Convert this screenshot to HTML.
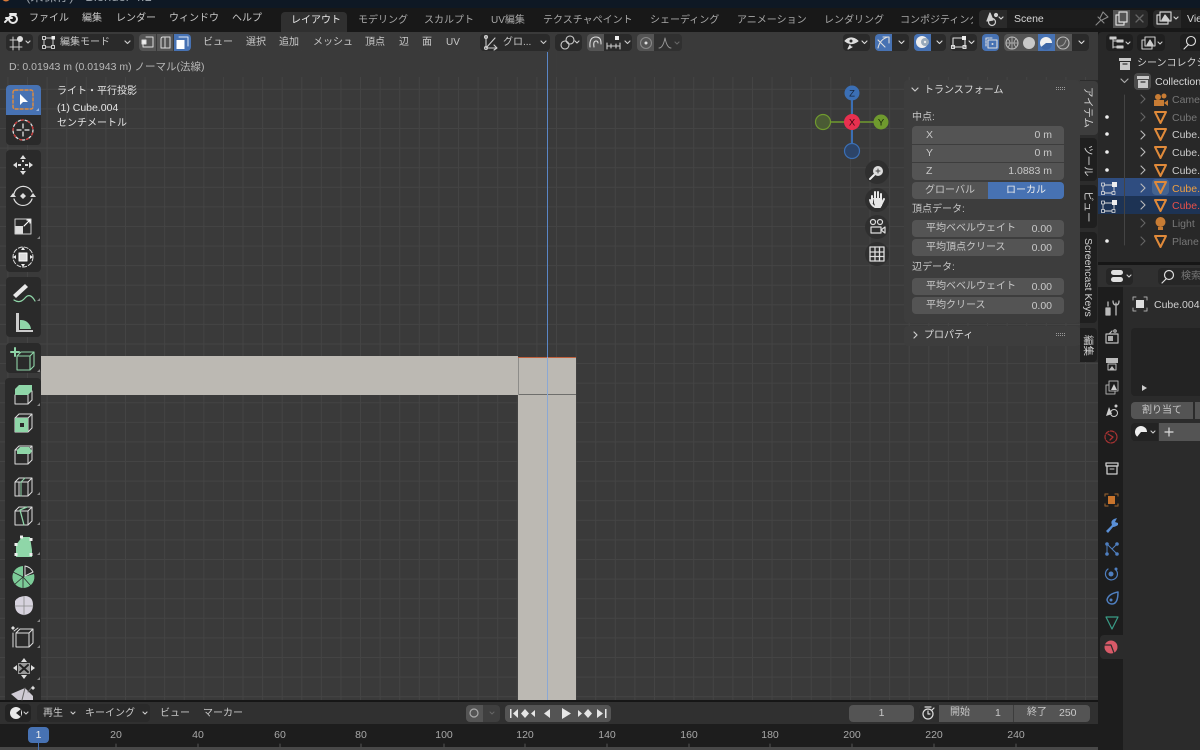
<!DOCTYPE html>
<html lang="ja"><head><meta charset="utf-8"><title>Blender</title>
<style>
html,body{margin:0;padding:0;background:#181818}
body{position:relative;width:1200px;height:750px;overflow:hidden;font-family:"Liberation Sans","Noto Sans CJK JP",sans-serif;font-size:10px;color:#ccc}
.b{position:absolute}
.t{position:absolute;white-space:nowrap;line-height:14px;font-size:10px;color:#c8c8c8;margin-top:1px}
.n{font-size:10.5px}
.r{text-align:right}
.c{text-align:center}
.v{transform:rotate(90deg);transform-origin:0 0;color:#d0d0d0;margin-top:0}
</style></head><body>
<!-- title -->
<div class="b" style="left:0;top:0;width:1200px;height:8px;background:#0e1824"></div>
<div class="t" style="left:26px;top:-11px;color:#98a0a8;font-size:13px">(未保存) - Blender 4.1</div>
<!-- top bar -->
<div class="b" style="left:0;top:8px;width:1200px;height:24px;background:#181818"></div>
<div class="b" style="left:281px;top:12px;width:66px;height:20px;background:#303030;border-radius:4px 4px 0 0"></div>
<span class="t" style="left:29px;top:11px">ファイル</span><span class="t" style="left:82px;top:11px">編集</span><span class="t" style="left:116px;top:11px">レンダー</span><span class="t" style="left:169px;top:11px">ウィンドウ</span><span class="t" style="left:232px;top:11px">ヘルプ</span>
<span class="t" style="left:291px;top:13px;color:#e6e6e6">レイアウト</span><span class="t" style="left:358px;top:13px;color:#a8a8a8">モデリング</span><span class="t" style="left:424px;top:13px;color:#a8a8a8">スカルプト</span><span class="t" style="left:491px;top:13px;color:#a8a8a8">UV編集</span><span class="t" style="left:543px;top:13px;color:#a8a8a8">テクスチャペイント</span><span class="t" style="left:650px;top:13px;color:#a8a8a8">シェーディング</span><span class="t" style="left:737px;top:13px;color:#a8a8a8">アニメーション</span><span class="t" style="left:824px;top:13px;color:#a8a8a8">レンダリング</span><span class="t" style="left:900px;top:13px;color:#a8a8a8;width:73px;overflow:hidden">コンポジティング</span>
<div class="b" style="left:979px;top:10px;width:169px;height:18px;background:#2a2a2a;border-radius:4px"></div>
<div class="b" style="left:1007px;top:10px;width:106px;height:18px;background:#1d1d1d"></div>
<div class="b" style="left:1113px;top:10px;width:17px;height:18px;background:#545454"></div>
<span class="t n" style="left:1014px;top:11px;color:#d8d8d8">Scene</span>
<div class="b" style="left:1153px;top:10px;width:47px;height:18px;background:#2a2a2a;border-radius:4px 0 0 4px"></div>
<div class="b" style="left:1181px;top:10px;width:19px;height:18px;background:#1d1d1d"></div>
<span class="t n" style="left:1187px;top:11px;color:#d8d8d8">View Layer</span>

<!-- viewport -->
<div class="b" style="left:0;top:32px;width:1098px;height:668px;background-color:#3a3a3a;background-image:linear-gradient(to right,#444 1px,transparent 1px),linear-gradient(to bottom,#444 1px,transparent 1px);background-size:19.6px 19.6px;background-position:7.4px -2px"></div>
<div class="b" style="left:0;top:32px;width:1098px;height:45px;background:#3a3a3a;opacity:.93"></div>
<!-- geometry -->
<div class="b" style="left:41px;top:356px;width:477px;height:39px;background:#bcb9b3"></div>
<div class="b" style="left:518px;top:357px;width:58px;height:343px;background:#bcb9b3"></div>
<div class="b" style="left:518px;top:394px;width:58px;height:1px;background:#6e6e6c"></div>
<div class="b" style="left:518px;top:357px;width:1px;height:38px;background:#8d8c89"></div>
<div class="b" style="left:518px;top:357px;width:58px;height:1px;background:#c0603c"></div>
<div class="b" style="left:547px;top:52px;width:1px;height:305px;background:#5a86c6"></div>
<div class="b" style="left:547px;top:357px;width:1px;height:343px;background:#8ba8d4"></div>

<!-- header rows -->
<div class="b" style="left:6px;top:34px;width:27px;height:17px;background:#2a2a2a;border-radius:4px"></div>
<div class="b" style="left:38px;top:34px;width:96px;height:17px;background:#2a2a2a;border-radius:4px"></div>
<span class="t" style="left:60px;top:35px">編集モード</span>
<div class="b" style="left:139px;top:34px;width:17px;height:17px;background:#545454;border-radius:4px 0 0 4px"></div>
<div class="b" style="left:157px;top:34px;width:16px;height:17px;background:#545454"></div>
<div class="b" style="left:174px;top:34px;width:17px;height:17px;background:#4772b3;border-radius:0 4px 4px 0"></div>
<span class="t" style="left:203px;top:35px">ビュー</span><span class="t" style="left:246px;top:35px">選択</span><span class="t" style="left:279px;top:35px">追加</span><span class="t" style="left:313px;top:35px">メッシュ</span><span class="t" style="left:365px;top:35px">頂点</span><span class="t" style="left:399px;top:35px">辺</span><span class="t" style="left:422px;top:35px">面</span><span class="t" style="left:446px;top:35px">UV</span>
<div class="b" style="left:480px;top:34px;width:70px;height:17px;background:#2a2a2a;border-radius:4px"></div>
<span class="t" style="left:503px;top:35px">グロ...</span>
<div class="b" style="left:555px;top:34px;width:27px;height:17px;background:#2a2a2a;border-radius:4px"></div>
<div class="b" style="left:587px;top:34px;width:17px;height:17px;background:#545454;border-radius:4px 0 0 4px"></div>
<div class="b" style="left:604px;top:34px;width:28px;height:17px;background:#2a2a2a;border-radius:0 4px 4px 0"></div>
<div class="b" style="left:637px;top:34px;width:17px;height:17px;background:#545454;border-radius:4px 0 0 4px"></div>
<div class="b" style="left:654px;top:34px;width:28px;height:17px;background:#303030;border-radius:0 4px 4px 0"></div>
<div class="b" style="left:843px;top:34px;width:27px;height:17px;background:#2a2a2a;border-radius:4px"></div>
<div class="b" style="left:875px;top:34px;width:17px;height:17px;background:#4772b3;border-radius:4px 0 0 4px"></div>
<div class="b" style="left:892px;top:34px;width:17px;height:17px;background:#2a2a2a;border-radius:0 4px 4px 0"></div>
<div class="b" style="left:914px;top:34px;width:17px;height:17px;background:#4772b3;border-radius:4px 0 0 4px"></div>
<div class="b" style="left:931px;top:34px;width:15px;height:17px;background:#2a2a2a;border-radius:0 4px 4px 0"></div>
<div class="b" style="left:950px;top:34px;width:27px;height:17px;background:#2a2a2a;border-radius:4px"></div>
<div class="b" style="left:982px;top:34px;width:17px;height:17px;background:#4772b3;border-radius:4px"></div>
<div class="b" style="left:1004px;top:34px;width:68px;height:17px;background:#545454;border-radius:4px 0 0 4px"></div>
<div class="b" style="left:1038px;top:34px;width:17px;height:17px;background:#4772b3"></div>
<div class="b" style="left:1072px;top:34px;width:17px;height:17px;background:#2a2a2a;border-radius:0 4px 4px 0"></div>
<span class="t n" style="left:9px;top:59px;color:#b8b8b8">D: 0.01943 m (0.01943 m) ノーマル(法線)</span>
<span class="t" style="left:57px;top:84px;color:#e4e4e4">ライト・平行投影</span>
<span class="t n" style="left:57px;top:100px;color:#e4e4e4">(1) Cube.004</span>
<span class="t" style="left:57px;top:116px;color:#e4e4e4">センチメートル</span>

<!-- toolbar -->
<div class="b" style="left:6px;top:85px;width:35px;height:60px;background:#2a2a2a;border-radius:4px"></div>
<div class="b" style="left:6px;top:85px;width:35px;height:30px;background:#4772b3;border-radius:4px 4px 0 0"></div>
<div class="b" style="left:6px;top:150px;width:35px;height:122px;background:#2a2a2a;border-radius:4px"></div>
<div class="b" style="left:6px;top:277px;width:35px;height:60px;background:#2a2a2a;border-radius:4px"></div>
<div class="b" style="left:6px;top:343px;width:35px;height:30px;background:#2a2a2a;border-radius:4px"></div>
<div class="b" style="left:5px;top:378px;width:36px;height:322px;background:#2a2a2a;border-radius:4px 4px 0 0"></div>

<!-- sidebar -->
<div class="b" style="left:904px;top:80px;width:176px;height:243px;background:#3d3d3d;border-radius:4px"></div>
<div class="b" style="left:904px;top:326px;width:176px;height:20px;background:#3d3d3d;border-radius:4px"></div>
<div class="b" style="left:1080px;top:80px;width:18px;height:282px;background:#2c2c2c"></div>
<div class="b" style="left:1080px;top:81px;width:18px;height:54px;background:#3d3d3d;border-radius:0 4px 4px 0"></div>
<div class="b" style="left:1080px;top:138px;width:17px;height:43px;background:#1f1f1f;border-radius:0 4px 4px 0"></div>
<div class="b" style="left:1080px;top:185px;width:17px;height:43px;background:#1f1f1f;border-radius:0 4px 4px 0"></div>
<div class="b" style="left:1080px;top:232px;width:17px;height:91px;background:#1f1f1f;border-radius:0 4px 4px 0"></div>
<div class="b" style="left:1080px;top:328px;width:17px;height:34px;background:#1f1f1f;border-radius:0 4px 4px 0"></div>
<span class="t v n" style="left:1095px;top:87px">アイテム</span>
<span class="t v n" style="left:1095px;top:145px">ツール</span>
<span class="t v n" style="left:1095px;top:191px">ビュー</span>
<span class="t v n" style="left:1095px;top:238px">Screencast Keys</span>
<span class="t v n" style="left:1095px;top:335px">編集</span>

<span class="t" style="left:924px;top:83px;color:#dcdcdc">トランスフォーム</span>
<span class="t" style="left:912px;top:110px">中点:</span>
<div class="b" style="left:912px;top:126px;width:152px;height:54px;background:#545454;border-radius:4px"></div>
<div class="b" style="left:912px;top:144px;width:152px;height:1px;background:#3d3d3d"></div>
<div class="b" style="left:912px;top:162px;width:152px;height:1px;background:#3d3d3d"></div>
<span class="t n" style="left:926px;top:127px">X</span><span class="t r n" style="right:148px;top:127px">0 m</span>
<span class="t n" style="left:926px;top:145px">Y</span><span class="t r n" style="right:148px;top:145px">0 m</span>
<span class="t n" style="left:926px;top:163px">Z</span><span class="t r n" style="right:148px;top:163px">1.0883 m</span>
<div class="b" style="left:912px;top:182px;width:76px;height:17px;background:#545454;border-radius:4px 0 0 4px"></div>
<div class="b" style="left:988px;top:182px;width:76px;height:17px;background:#4772b3;border-radius:0 4px 4px 0"></div>
<span class="t c" style="left:912px;top:183px;width:76px">グローバル</span><span class="t c" style="left:988px;top:183px;width:76px;color:#eee">ローカル</span>
<span class="t" style="left:912px;top:202px">頂点データ:</span>
<div class="b" style="left:912px;top:220px;width:152px;height:17px;background:#545454;border-radius:4px"></div>
<div class="b" style="left:912px;top:239px;width:152px;height:17px;background:#545454;border-radius:4px"></div>
<span class="t" style="left:926px;top:221px">平均ベベルウェイト</span><span class="t r n" style="right:148px;top:221px">0.00</span>
<span class="t" style="left:926px;top:240px">平均頂点クリース</span><span class="t r n" style="right:148px;top:240px">0.00</span>
<span class="t" style="left:912px;top:260px">辺データ:</span>
<div class="b" style="left:912px;top:278px;width:152px;height:17px;background:#545454;border-radius:4px"></div>
<div class="b" style="left:912px;top:297px;width:152px;height:17px;background:#545454;border-radius:4px"></div>
<span class="t" style="left:926px;top:279px">平均ベベルウェイト</span><span class="t r n" style="right:148px;top:279px">0.00</span>
<span class="t" style="left:926px;top:298px">平均クリース</span><span class="t r n" style="right:148px;top:298px">0.00</span>
<span class="t" style="left:924px;top:328px;color:#dcdcdc">プロパティ</span>

<!-- timeline -->
<div class="b" style="left:0;top:700px;width:1098px;height:2px;background:#161616"></div>
<div class="b" style="left:0;top:702px;width:1098px;height:22px;background:#303030"></div>
<div class="b" style="left:0;top:724px;width:1098px;height:23px;background:#1d1d1d"></div>
<div class="b" style="left:0;top:747px;width:1098px;height:3px;background:#484848"></div>
<div class="b" style="left:5px;top:704px;width:26px;height:18px;background:#232323;border-radius:4px"></div>
<div class="b" style="left:37px;top:704px;width:113px;height:18px;background:#2a2a2a;border-radius:4px"></div>
<span class="t" style="left:43px;top:706px">再生</span><span class="t" style="left:85px;top:706px">キーイング</span><span class="t" style="left:160px;top:706px">ビュー</span><span class="t" style="left:203px;top:706px">マーカー</span>
<div class="b" style="left:466px;top:705px;width:17px;height:17px;background:#545454;border-radius:4px 0 0 4px"></div>
<div class="b" style="left:483px;top:705px;width:17px;height:17px;background:#3f3f3f;border-radius:0 4px 4px 0"></div>
<div class="b" style="left:505px;top:705px;width:106px;height:17px;background:#545454;border-radius:4px"></div>
<div class="b" style="left:849px;top:705px;width:65px;height:17px;background:#545454;border-radius:4px"></div>
<div class="b" style="left:919px;top:705px;width:171px;height:17px;background:#545454;border-radius:4px"></div>
<div class="b" style="left:919px;top:705px;width:20px;height:17px;background:#2e2e2e;border-radius:4px 0 0 4px"></div>
<div class="b" style="left:1013px;top:705px;width:1px;height:17px;background:#3d3d3d"></div>
<span class="t c n" style="left:849px;top:705px;width:65px">1</span>
<span class="t" style="left:950px;top:705px">開始</span><span class="t n" style="left:995px;top:705px">1</span><span class="t" style="left:1027px;top:705px">終了</span><span class="t n" style="left:1059px;top:705px">250</span>
<div class="b" style="left:28px;top:727px;width:21px;height:16px;background:#4772b3;border-radius:4px"></div>
<div class="b" style="left:38px;top:743px;width:1px;height:7px;background:#4772b3"></div>
<span class="t c n" style="left:28px;top:727px;width:21px;color:#eee">1</span>
<span class="t c n" style="left:96px;top:727px;width:40px;color:#a8a8a8">20</span><span class="t c n" style="left:178px;top:727px;width:40px;color:#a8a8a8">40</span><span class="t c n" style="left:260px;top:727px;width:40px;color:#a8a8a8">60</span><span class="t c n" style="left:341px;top:727px;width:40px;color:#a8a8a8">80</span><span class="t c n" style="left:424px;top:727px;width:40px;color:#a8a8a8">100</span><span class="t c n" style="left:505px;top:727px;width:40px;color:#a8a8a8">120</span><span class="t c n" style="left:587px;top:727px;width:40px;color:#a8a8a8">140</span><span class="t c n" style="left:669px;top:727px;width:40px;color:#a8a8a8">160</span><span class="t c n" style="left:750px;top:727px;width:40px;color:#a8a8a8">180</span><span class="t c n" style="left:832px;top:727px;width:40px;color:#a8a8a8">200</span><span class="t c n" style="left:914px;top:727px;width:40px;color:#a8a8a8">220</span><span class="t c n" style="left:996px;top:727px;width:40px;color:#a8a8a8">240</span>

<!-- outliner -->
<div class="b" style="left:1098px;top:32px;width:102px;height:230px;background:#282828;border-radius:4px 0 0 0"></div>
<div class="b" style="left:1106px;top:34px;width:27px;height:17px;background:#1f1f1f;border-radius:4px"></div>
<div class="b" style="left:1137px;top:34px;width:28px;height:17px;background:#1f1f1f;border-radius:4px"></div>
<div class="b" style="left:1180px;top:34px;width:20px;height:17px;background:#1f1f1f;border-radius:4px 0 0 4px"></div>
<div class="b" style="left:1098px;top:178px;width:102px;height:18px;background:#2f4d80"></div>
<div class="b" style="left:1098px;top:196px;width:102px;height:18px;background:#1d3354"></div>
<div class="b" style="left:1134px;top:73px;width:17px;height:17px;background:#4b4b4b;border-radius:4px"></div>
<div class="b" style="left:1152px;top:179px;width:17px;height:16px;background:#44638f;border-radius:4px"></div>
<span class="t" style="left:1137px;top:56px;color:#d0d0d0">シーンコレクション</span>
<span class="t n" style="left:1155px;top:74px;color:#d8d8d8">Collection</span>
<span class="t n" style="left:1172px;top:92px;color:#777">Camera</span>
<span class="t n" style="left:1172px;top:110px;color:#777">Cube</span>
<span class="t n" style="left:1172px;top:127px;color:#ccc">Cube.001</span>
<span class="t n" style="left:1172px;top:145px;color:#ccc">Cube.002</span>
<span class="t n" style="left:1172px;top:163px;color:#ccc">Cube.003</span>
<span class="t n" style="left:1172px;top:181px;color:#f0a040">Cube.004</span>
<span class="t n" style="left:1172px;top:198px;color:#e8504a">Cube.005</span>
<span class="t n" style="left:1172px;top:216px;color:#777">Light</span>
<span class="t n" style="left:1172px;top:234px;color:#777">Plane</span>

<!-- properties -->
<div class="b" style="left:1098px;top:262px;width:102px;height:3px;background:#161616"></div>
<div class="b" style="left:1098px;top:265px;width:102px;height:22px;background:#303030"></div>
<div class="b" style="left:1098px;top:287px;width:25px;height:463px;background:#1d1d1d"></div>
<div class="b" style="left:1123px;top:287px;width:77px;height:463px;background:#2b2b2b"></div>
<div class="b" style="left:1100px;top:635px;width:23px;height:24px;background:#2b2b2b;border-radius:4px 0 0 4px"></div>
<div class="b" style="left:1106px;top:268px;width:27px;height:17px;background:#262626;border-radius:4px"></div>
<div class="b" style="left:1158px;top:268px;width:42px;height:17px;background:#262626;border-radius:4px 0 0 4px"></div>
<span class="t" style="left:1181px;top:269px;color:#777">検索</span>
<span class="t n" style="left:1154px;top:297px;color:#d0d0d0">Cube.004</span>
<div class="b" style="left:1131px;top:328px;width:69px;height:68px;background:#232323;border-radius:4px 0 0 4px"></div>
<div class="b" style="left:1131px;top:402px;width:62px;height:17px;background:#545454;border-radius:4px 0 0 4px"></div>
<div class="b" style="left:1195px;top:402px;width:5px;height:17px;background:#545454"></div>
<span class="t c" style="left:1131px;top:403px;width:62px">割り当て</span>
<div class="b" style="left:1131px;top:423px;width:27px;height:18px;background:#232323;border-radius:4px 0 0 4px"></div>
<div class="b" style="left:1159px;top:423px;width:41px;height:18px;background:#545454"></div>

<!-- icons -->
<svg class="b" style="left:0;top:0" width="1200" height="750" viewBox="0 0 1200 750" fill="none" stroke-linecap="round" stroke-linejoin="round">
<defs>
<path id="cube" d="M-8-5H5V9H-8ZM-8-5-4-9H9V5L5 9M5-5 9-9"/>
</defs>
<!-- blender logo -->
<g transform="translate(12,19)" stroke="#e8e8e8" stroke-width="2"><circle cx="1" cy="0" r="4"/><path d="M-6-1H0M-7 3-2-2M-2-5 4-5"/></g>
<circle cx="6" cy="-3" r="4.500" fill="#d87a3a"/>
<!-- scene/view icons -->
<g stroke="#d0d0d0" stroke-width="1.200"><circle cx="992" cy="22" r="3.500"/><path d="M987 21 990 13 993 20Z" fill="#d0d0d0"/><circle cx="996" cy="15" r="1.500" fill="#d0d0d0"/><path d="M1003 17l-2 2-2-2"/>
<rect x="1157" y="15" width="11" height="9"/><rect x="1160" y="12" width="11" height="9" fill="#2a2a2a"/><path d="M1162 20 1165 15 1169 20Z" fill="#d0d0d0"/><path d="M1178 17l-2 2-2-2"/></g>
<path d="M1096 25 1101 20M1098 17 1104 23M1100 18 1103 12 1108 17 1102 20" stroke="#8a8a8a" stroke-width="1.100"/>
<g stroke="#ddd" stroke-width="1.200"><rect x="1116" y="15" width="8" height="10"/><rect x="1119" y="12" width="8" height="10" fill="#545454"/></g>
<path d="M1136 15 1143 22M1143 15 1136 22" stroke="#666" stroke-width="1.300"/>
<!-- header icons -->
<g stroke="#ccc" stroke-width="1"><path d="M10 40H22M10 47H22M13 37V50M19 37V50"/><circle cx="20" cy="39" r="3" fill="#ddd" stroke="none"/><path d="M30 41l-2 2-2-2" stroke-width="1.200"/>
<rect x="44" y="38" width="9" height="9"/><rect x="42.500" y="36.500" width="3" height="3" fill="#2a2a2a"/><rect x="51.500" y="36" width="3.500" height="3.500" fill="#eee" stroke="none"/><rect x="42.500" y="45.500" width="3" height="3" fill="#2a2a2a"/><rect x="51.500" y="45.500" width="3" height="3" fill="#2a2a2a"/><path d="M130 41l-2.500 2.500-2.500-2.500" stroke-width="1.200"/></g>
<g stroke="#ddd" stroke-width="1"><path d="M146 37H153V47H143V41"/><rect x="142" y="40" width="4" height="4" fill="#eee"/><path d="M161 48V39Q161 37 163 37H170V48H161ZM165 48V38"/><path d="M179 37H188V46" stroke="#dfe8f5"/><rect x="176.500" y="40" width="8" height="9" fill="#fff" stroke="none"/></g>
<g stroke="#ccc" stroke-width="1.100"><path d="M486 36V48H497M494 45 497 48 494 50M486 48 495 38"/><circle cx="486" cy="37" r="1.500"/><circle cx="486" cy="48" r="1.500"/><path d="M546 41l-2.500 2.500-2.500-2.500"/>
<circle cx="565" cy="45" r="4"/><circle cx="570" cy="40" r="4"/><path d="M579 41l-2 2-2-2"/>
<path d="M590 47Q589 37 596 37Q601 37 601 43V44M594 47Q593 41 596 41Q598 41 598 43" stroke="#ddd"/>
<path d="M607 43V49M620 43V49M607 46H620M611 44V48M616 44V48"/><rect x="615" y="36" width="4" height="4" fill="#eee" stroke="none"/><path d="M630 41l-2.500 2.500-2.500-2.500"/>
<circle cx="646" cy="43" r="5.500" stroke="#888"/><circle cx="646" cy="43" r="1.500" fill="#ddd" stroke="none"/>
<path d="M659 48Q663 48 665 38Q667 48 671 48" stroke="#999" stroke-width=".9"/><path d="M679 42l-2 2-2-2" stroke="#666"/></g>
<g stroke="#ddd" stroke-width="1.100"><path d="M845 41Q851 35 858 41Q851 46 845 41ZM850 45 848 49 852 47" fill="#ddd"/><circle cx="851" cy="41" r="1.500" fill="#2a2a2a" stroke="none"/><path d="M867 41l-2.500 2.500-2.500-2.500"/>
<path d="M878 48Q880 39 888 37M883 37H889V43M878 40 885 47"/><path d="M904 41l-2.500 2.500-2.500-2.500"/>
<circle cx="922" cy="42" r="6" fill="#eee" stroke="none"/><circle cx="925" cy="42" r="4" fill="#9ab" stroke="none"/><circle cx="925" cy="42" r="1.200" fill="#eee" stroke="none"/><path d="M942 41l-2.500 2.500-2.500-2.500"/>
<rect x="953" y="38" width="12" height="9"/><rect x="951.500" y="45.500" width="3" height="3"/><rect x="962" y="36" width="4" height="4" fill="#eee" stroke="none"/><rect x="963" y="45.500" width="3" height="3"/><path d="M974 41l-2.500 2.500-2.500-2.500"/>
<path d="M986 46V38H993" stroke-dasharray="2 1"/><rect x="988" y="40" width="9" height="8"/><circle cx="992.500" cy="44" r="1" fill="#ddd" stroke="none"/>
<circle cx="1012" cy="43" r="6" stroke="#bbb"/><path d="M1006 43H1018M1012 37V49M1008 39Q1012 43 1008 47M1016 39Q1012 43 1016 47" stroke="#bbb" stroke-width=".8"/>
<circle cx="1029" cy="43" r="6" fill="#c8c8c8" stroke="none"/>
<circle cx="1046" cy="43" r="6" fill="#f0f0f0" stroke="none"/><path d="M1046 43H1052A6 6 0 0 1 1041 47Z" fill="#3d66a5" stroke="none"/>
<circle cx="1063" cy="43" r="6" stroke="#bbb"/><path d="M1059 46Q1064 47 1066 40" stroke="#999"/><path d="M1084 41l-2.500 2.500-2.500-2.500"/></g>
<!-- toolbar icons -->
<g stroke="#e28c3c" stroke-width="1.400" stroke-dasharray="3 2"><rect x="13" y="90" width="20" height="19" rx="2"/></g>
<path d="M20 94V105L23 102 28 102Z" fill="#fff"/>
<path d="M36 111h3v-3z" fill="#9cb7e0"/>
<circle cx="23" cy="130" r="10" stroke="#ddd" stroke-width="1.300" stroke-dasharray="5 2"/><circle cx="23" cy="130" r="10" stroke="#c33" stroke-width="1.300" stroke-dasharray="2 5" stroke-dashoffset="4"/><path d="M23 124V128M23 132V136M17 130H21M25 130H29" stroke="#eee" stroke-width="1.200"/>
<g fill="#ddd"><path d="M23 155 26 159H20ZM23 175 26 171H20ZM13 165 17 162V168ZM33 165 29 162V168Z"/><rect x="18" y="164" width="3" height="2"/><rect x="25" y="164" width="3" height="2"/><rect x="22" y="160" width="2" height="2"/><rect x="22" y="168" width="2" height="2"/></g>
<g stroke="#ddd" stroke-width="1.200"><path d="M14 194A9.500 9.500 0 0 1 32 192M32 199A9.500 9.500 0 0 1 14 199"/></g><path d="M23 193 26 196 23 199 20 196ZM13 193l3 4h-6ZM33 193l3 4h-6Z" fill="#ddd"/>
<rect x="15" y="226" width="8" height="8" fill="#ddd"/><rect x="15" y="219" width="16" height="15" stroke="#ccc"/><path d="M24 226 30 220M27 220H30V223" stroke="#fff" stroke-width="1.200"/>
<path d="M37 239h3v-3zM37 301h3v-3zM37 372h3v-3zM37 406h3v-3zM37 495h3v-3zM37 525h3v-3zM37 555h3v-3zM37 622h3v-3zM37 648h3v-3zM37 680h3v-3z" fill="#888"/>
<circle cx="23" cy="257" r="10" stroke="#ddd" stroke-dasharray="4 2"/><rect x="19" y="253" width="8" height="8" fill="#ddd" stroke="#fff"/><path d="M23 247l2 3h-4zM23 267l2-3h-4zM13 257l3 2v-4zM33 257l-3 2v-4z" fill="#eee"/>
<path d="M13 295 25 284 28 287 16 298Z" fill="#e8e8e8"/><path d="M14 300Q20 304 25 298T35 301" stroke="#8fd6a8" stroke-width="1.200"/>
<path d="M16 313V332H33V330H19V313Z" fill="#ccc"/><path d="M20 320A10 10 0 0 1 31 329H20Z" fill="#8fd6a8"/>
<g transform="translate(25,361)"><use href="#cube" stroke="#8fd6a8" stroke-width="1.100"/></g><path d="M15 348V356M11 352H19" stroke="#8fd6a8" stroke-width="2"/>
<g transform="translate(23,393)"><path d="M-8-4H5V2H-8ZM-8-4-4-8H9V-2L5 2V-4" fill="#8fd6a8"/><path d="M-8 2V11H5V2M5 11 9 7V-2" stroke="#ddd" stroke-width="1"/></g>
<g transform="translate(23,423)"><use href="#cube" stroke="#ddd"/><path d="M-8-5H5V9H-8ZM-3 0H1V4H-3Z" fill="#8fd6a8" fill-rule="evenodd"/></g>
<g transform="translate(23,455)"><use href="#cube" stroke="#ddd"/><path d="M-6-5-3-8H6L9-4 7-1H-6Z" fill="#8fd6a8"/></g>
<g transform="translate(23,487)"><use href="#cube" stroke="#ddd"/><path d="M-2-5V9M2-9-2-5" stroke="#8fd6a8"/><path d="M-4-5V9" stroke="#ddd"/></g>
<g transform="translate(23,516)"><use href="#cube" stroke="#ddd"/><path d="M-3-6 1 9M-3-6 4-9" stroke="#8fd6a8" stroke-width="1.300"/></g>
<path d="M16 557V545L22 537H30L32 550V557Z" fill="#8fd6a8"/><g fill="#eee"><rect x="14.500" y="543" width="3" height="3"/><rect x="20" y="535.500" width="3" height="3"/><rect x="29.500" y="538" width="3" height="3"/><rect x="14.500" y="553" width="3" height="3"/><rect x="29.500" y="553" width="3" height="3"/></g>
<path d="M23 577V566A11 11 0 1 0 34 574Z" fill="#7ccc98"/><path d="M23 577 13 572M23 577 14 585M23 577V589M23 577 31 586" stroke="#2a2a2a" stroke-width=".8"/><path d="M25 566A11 11 0 0 1 33 572L25 576Z" stroke="#ddd"/>
<path d="M15 601Q18 596 26 596Q33 597 33 605Q33 614 24 615Q15 614 15 605Z" fill="#d7d3de"/><path d="M15 606H33M24 597V615" stroke="#8a8a8a" stroke-width=".8"/>
<g transform="translate(24,638)"><use href="#cube" stroke="#ddd"/><path d="M-11-5V9M-10-7-6-10" stroke="#ddd"/></g><path d="M13 626l2 2-2 2-2-2z" fill="#ddd"/>
<g fill="#ddd"><rect x="18" y="663" width="12" height="11" fill="#999"/><path d="M24 658l3 4h-6zM24 679l3-4h-6zM13 668l4-3v6zM35 668l-4-3v6z"/><path d="M20 665 28 672M28 665 20 672" stroke="#222" stroke-width="2"/></g>
<path d="M11 694 25 688 33 696V700H18Z" fill="#cfcbd4"/><path d="M25 688 22 700M28 692 33 686" stroke="#666"/><path d="M33 686l2 2-2 2-2-2z" fill="#ddd"/>
<!-- gizmo -->
<path d="M852 100V144" stroke="#3b6fb5" stroke-width="2"/><path d="M829 122H874" stroke="#6f9a2e" stroke-width="1.500"/>
<circle cx="852" cy="151" r="7.500" fill="#2c4468" stroke="#3b6fb5" stroke-width="1.200"/>
<circle cx="823" cy="122" r="7.500" fill="#4a5b34" stroke="#6f9a2e" stroke-width="1.200"/>
<circle cx="852" cy="93" r="7.500" fill="#3b6fb5"/><circle cx="881" cy="122" r="7.500" fill="#6f9a2e"/><circle cx="852" cy="122" r="8" fill="#e8304f"/>
<text x="852" y="96.500" fill="#16243a" font-size="9.500" text-anchor="middle" font-family="Liberation Sans">Z</text><text x="881" y="125.500" fill="#16240a" font-size="9.500" text-anchor="middle" font-family="Liberation Sans">Y</text><text x="852" y="125.500" fill="#3a0510" font-size="9.500" text-anchor="middle" font-family="Liberation Sans">X</text>
<circle cx="877" cy="172" r="12" fill="#2f2f2f"/><circle cx="877" cy="200" r="12" fill="#2f2f2f"/><circle cx="877" cy="227" r="12" fill="#2f2f2f"/><circle cx="877" cy="254" r="12" fill="#2f2f2f"/>
<circle cx="878" cy="171" r="5" fill="#ddd"/><path d="M876 171H880M878 169V173" stroke="#444"/><path d="M874 175 870 179" stroke="#eee" stroke-width="2"/>
<path d="M872 203V196M875 203V192M878 203V192M881 203V194M884 199 880 207H875Q871 205 870 200" stroke="#e8e8e8" stroke-width="2"/><path d="M873 198H882V206H875Z" fill="#e8e8e8"/>
<g stroke="#ddd" stroke-width="1.200"><circle cx="873" cy="222" r="2.500"/><circle cx="880" cy="222" r="2.500"/><rect x="871" y="227" width="10" height="6"/><path d="M881 230 885 227V233Z"/></g>
<g stroke="#ddd" stroke-width="1.300"><rect x="870" y="247" width="14" height="14"/><path d="M875 247V261M879.500 247V261M870 252H884M870 256.500H884"/></g>
<!-- sidebar small -->
<path d="M912 88l3 3 3-3M914 332l3 3-3 3" stroke="#ccc" stroke-width="1.200"/>
<g stroke="#999" stroke-dasharray="1 1" stroke-linecap="butt"><path d="M1056 87.500H1066M1056 89.500H1066M1056 333.500H1066M1056 335.500H1066"/></g>
<!-- timeline icons -->
<circle cx="16" cy="713" r="6" fill="#e8e8e8"/><path d="M16 713 21 709V717Z" fill="#232323"/><path d="M28 712l-2 2-2-2M75 712l-2 2-2-2M147 712l-2 2-2-2" stroke="#ccc" stroke-width="1.100"/>
<circle cx="474" cy="713" r="4" stroke="#aaa" stroke-width="1.200"/><path d="M494 712l-2 2-2-2" stroke="#666"/>
<g fill="#e6e6e6"><path d="M510 709V718H511.500V709ZM513 713.500 518 709V718Z"/><path d="M521 713.500 525 709 529 713.500 525 718ZM535 710 531 713.500 535 717Z"/><path d="M550 709V718L544 713.500Z"/><path d="M562 708V719L571 713.500Z"/><path d="M578 710 582 713.500 578 717ZM584 713.500 588 709 592 713.500 588 718Z"/><path d="M597 709V718L603 713.500ZM605 709V718H606.500V709Z"/></g>
<g stroke="#ddd" stroke-width="1.200"><circle cx="928" cy="714" r="5"/><path d="M928 711V714H930M925 707H931M934 708 932 710"/></g>
<g stroke="#555"><path d="M116 744V747M198 744V747M280 744V747M361 744V747M444 744V747M525 744V747M607 744V747M689 744V747M770 744V747M852 744V747M934 744V747M1016 744V747"/></g>
<!-- outliner -->
<g stroke="#ccc" stroke-width="1.100"><path d="M1113 38V48M1113 41H1117M1113 47H1117"/><rect x="1110" y="37" width="6" height="2" fill="#ccc"/><rect x="1117" y="40" width="6" height="2" fill="#ccc"/><rect x="1117" y="46" width="6" height="2" fill="#ccc"/><path d="M1130 42l-2 2-2-2"/>
<rect x="1142" y="40" width="10" height="9"/><rect x="1145" y="37" width="10" height="9" fill="#1f1f1f"/><path d="M1147 45 1150 40 1153 45Z" fill="#ccc"/><path d="M1162 42l-2 2-2-2"/>
<circle cx="1191" cy="41" r="4.500" stroke="#e0e0e0"/><path d="M1188 45 1184 49" stroke="#e0e0e0"/></g>
<g fill="#c8c8c8"><path d="M1119 58H1131V61H1119ZM1120 62H1130V70H1120Z"/><path d="M1137 76H1149V79H1137ZM1138 80H1148V88H1138Z"/></g><path d="M1123 64H1127M1141 82H1145" stroke="#333" stroke-width="1.200"/>
<path d="M1121 79l3.500 3.500 3.500-3.500" stroke="#aaa" stroke-width="1.200"/>
<path d="M1124.500 95V245" stroke="#444"/>
<g stroke-width="1.100"><path d="M1141 95l4 4-4 4M1141 113l4 4-4 4M1141 219l4 4-4 4M1141 237l4 4-4 4" stroke="#666"/><path d="M1141 131l4 4-4 4M1141 148l4 4-4 4M1141 166l4 4-4 4M1141 184l4 4-4 4M1141 201l4 4-4 4" stroke="#bbb"/></g>
<g fill="#eee"><circle cx="1107" cy="117" r="1.800"/><circle cx="1107" cy="134" r="1.800"/><circle cx="1107" cy="152" r="1.800"/><circle cx="1107" cy="170" r="1.800"/><circle cx="1107" cy="241" r="1.800"/></g>
<g stroke="#e08a3a" stroke-width="2"><path d="M1155 112H1166L1160.500 123ZM1155 129H1166L1160.500 140ZM1155 147H1166L1160.500 158ZM1155 165H1166L1160.500 176ZM1155 182H1166L1160.500 193ZM1155 200H1166L1160.500 211ZM1155 236H1166L1160.500 247Z"/></g>
<g fill="#c87c34"><circle cx="1158" cy="97" r="3"/><circle cx="1164" cy="96" r="2.500"/><rect x="1154" y="100" width="10" height="6"/><path d="M1164 103 1168 100V106Z"/><circle cx="1160.500" cy="222" r="5"/><rect x="1158" y="227" width="5" height="3"/></g>
<g stroke="#ddd" stroke-width=".9"><rect x="1103" y="185" width="11" height="8"/><rect x="1103" y="203" width="11" height="8"/></g>
<g fill="#eee"><rect x="1112" y="182" width="5" height="5"/><rect x="1112" y="200" width="5" height="5"/></g>
<g fill="#2f4d80" stroke="#ddd" stroke-width=".8"><rect x="1101.500" y="183" width="3" height="3"/><rect x="1101.500" y="191.500" width="3" height="3"/><rect x="1112" y="191.500" width="3" height="3"/></g>
<g fill="#1d3354" stroke="#ddd" stroke-width=".8"><rect x="1101.500" y="201" width="3" height="3"/><rect x="1101.500" y="209.500" width="3" height="3"/><rect x="1112" y="209.500" width="3" height="3"/></g>
<!-- properties -->
<rect x="1111" y="270" width="12" height="5" rx="2.500" fill="#e0e0e0"/><rect x="1111" y="277" width="12" height="5" rx="2.500" fill="#e0e0e0"/><path d="M1131 275l-2 2-2-2" stroke="#ccc" stroke-width="1.100"/>
<circle cx="1169" cy="275" r="4.500" stroke="#ddd" stroke-width="1.200"/><path d="M1166 279 1162 283" stroke="#ddd" stroke-width="1.200"/>
<rect x="1136" y="300" width="8" height="8" fill="#ddd"/><path d="M1133 300V297H1136M1144 297H1147V300M1147 308V311H1144M1136 311H1133V308" stroke="#aaa"/>
<path d="M1142 385V391L1147 388Z" fill="#ccc"/>
<circle cx="1141" cy="432" r="6" fill="#eee"/><path d="M1141 432H1147A6 6 0 0 1 1137 437Z" fill="#222"/><path d="M1155 431l-2 2-2-2" stroke="#ccc" stroke-width="1.100"/>
<path d="M1169 428V436M1165 432H1173" stroke="#ddd" stroke-width="1.200"/>
<g stroke="#bbb" stroke-width="1.300"><path d="M1116 303V315M1119 301Q1119 305 1116 305Q1113 305 1113 301"/><path d="M1108 302V306"/><rect x="1106" y="308" width="4" height="7" fill="#bbb"/></g>
<g stroke="#bbb" stroke-width="1.200"><rect x="1106" y="334" width="12" height="9"/><path d="M1109 334 1112 331"/><circle cx="1115" cy="331" r="1.200"/></g><rect x="1108" y="336" width="5" height="5" fill="#aaa"/>
<path d="M1106 358H1118V363H1106Z" fill="#bbb"/><rect x="1108" y="364" width="8" height="6" stroke="#bbb"/><path d="M1109 370 1112 366 1115 370Z" fill="#bbb"/>
<g stroke="#aaa" stroke-width="1"><rect x="1106" y="385" width="9" height="9"/><rect x="1109" y="381" width="9" height="10" fill="#1d1d1d"/></g><path d="M1111 390 1114 384 1117 390Z" fill="#ccc"/>
<path d="M1106 416 1109 407 1112 414Z" fill="#ccc"/><circle cx="1114" cy="413" r="3.500" stroke="#ccc"/><circle cx="1116" cy="406" r="1.500" fill="#ccc"/>
<circle cx="1111" cy="437" r="6" stroke="#a33" stroke-width="1.200" stroke-dasharray="4 1.500"/><path d="M1108 434 1113 437 1110 440" stroke="#a33" stroke-width="1.300"/>
<rect x="1106" y="463" width="12" height="3" fill="none" stroke="#ccc" stroke-width="1.300"/><rect x="1107" y="466" width="10" height="8" stroke="#ccc" stroke-width="1.300"/><path d="M1110 469H1114" stroke="#ccc"/>
<rect x="1108" y="496" width="7" height="8" fill="#c8742c"/><path d="M1105 496V494H1108M1115 494H1118V496M1118 504V506H1115M1108 506H1105V504" stroke="#8a5a2c" stroke-width="1.200"/>
<path d="M1106 531 1112 525Q1110 521 1114 519L1117 518 1115 522 1118 523 1118 525Q1115 527 1113 527L1108 533Z" fill="#5a8fd6"/>
<g stroke="#4f7fc0" stroke-width="1"><path d="M1107 544 1112 549 1117 544M1107 544 1107 554M1112 549 1117 554"/><circle cx="1107" cy="544" r="1.300" fill="#4f7fc0"/><circle cx="1117" cy="544" r="1.300" fill="#4f7fc0"/><circle cx="1107" cy="554" r="1.300" fill="#4f7fc0"/><circle cx="1117" cy="554" r="1.300" fill="#4f7fc0"/></g>
<circle cx="1111" cy="574" r="2.500" fill="#4f7fc0"/><path d="M1116 570A6 6 0 1 1 1108 569" stroke="#4f7fc0" stroke-width="1.200"/><circle cx="1116" cy="569" r="1.500" fill="#4f7fc0"/>
<path d="M1107 600Q1108 594 1118 592Q1118 604 1112 604Q1108 604 1107 600Z" stroke="#4f7fc0" stroke-width="1.500"/><circle cx="1111" cy="600" r="1.500" fill="#4f7fc0"/>
<path d="M1106 617H1118L1112 629Z" stroke="#3a9c86" stroke-width="1.200"/>
<circle cx="1111" cy="647" r="6.500" fill="#d85a68"/><path d="M1105 645H1111L1114 653" stroke="#2b2b2b" stroke-width="1.200"/>
</svg>
</body></html>
